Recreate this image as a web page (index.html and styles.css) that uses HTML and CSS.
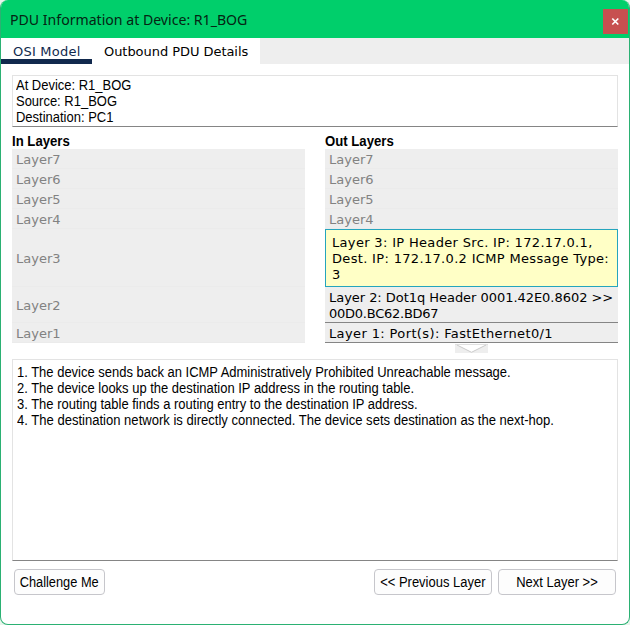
FILE: index.html
```html
<!DOCTYPE html>
<html lang="en">
<head>
<meta charset="utf-8">
<title>PDU Information</title>
<link rel="stylesheet" href="styles.css">
</head>
<body>
<div class="window">
  <header class="titlebar">
    <h1 class="title"><span class="narrow">PDU Information at Device: R1_BOG</span></h1>
    <button class="close" aria-label="Close"><svg width="9" height="9" viewBox="0 0 9 9"><path d="M1.3 1.5 7.3 7.5M7.3 1.5 1.3 7.5" stroke="#fff" stroke-width="1.7" fill="none"/></svg></button>
  </header>
  <nav class="tabs">
    <div class="tab active">OSI Model</div>
    <div class="tab outbound">Outbound PDU Details</div>
  </nav>
  <main class="content">
    <section class="box info">
      <p class="narrow">At Device: R1_BOG</p>
      <p class="narrow">Source: R1_BOG</p>
      <p class="narrow">Destination: PC1</p>
    </section>
    <div class="columns">
      <section class="column">
        <h2 class="narrow">In Layers</h2>
        <div class="layer">Layer7</div>
        <div class="layer">Layer6</div>
        <div class="layer">Layer5</div>
        <div class="layer">Layer4</div>
        <div class="layer tall">Layer3</div>
        <div class="layer medium">Layer2</div>
        <div class="layer">Layer1</div>
      </section>
      <section class="column">
        <h2 class="narrow">Out Layers</h2>
        <div class="layer">Layer7</div>
        <div class="layer">Layer6</div>
        <div class="layer">Layer5</div>
        <div class="layer">Layer4</div>
        <div class="layer tall selected">
          <p>Layer 3: IP Header Src. IP: 172.17.0.1,<br>Dest. IP: 172.17.0.2 ICMP Message Type:<br>3</p>
        </div>
        <div class="layer medium used">
          <p>Layer 2: Dot1q Header 0001.42E0.8602 &gt;&gt;<br><span class="mac">00D0.BC62.BD67</span></p>
        </div>
        <div class="layer used port">Layer 1: Port(s): FastEthernet0/1</div>
        <svg class="arrow" width="33" height="9" viewBox="0 0 33 9"><path d="M0 0H33V9H0Z" fill="#eee"/><path d="M2.5 1 16.5 8 30.5 1Z" fill="#fff"/><path d="M0 .5H33" stroke="#e0e0e0"/><path d="M2 1 16.5 8.3 31 1" fill="none" stroke="#ccc"/></svg>
      </section>
    </div>
    <section class="box details">
      <p class="narrow">1. The device sends back an ICMP Administratively Prohibited Unreachable message.</p>
      <p class="narrow">2. The device looks up the destination IP address in the routing table.</p>
      <p class="narrow">3. The routing table finds a routing entry to the destination IP address.</p>
      <p class="narrow next-hop">4. The destination network is directly connected. The device sets destination as the next-hop.</p>
    </section>
    <footer class="actions">
      <button class="btn challenge"><span class="narrow">Challenge Me</span></button>
      <button class="btn"><span class="narrow">&lt;&lt; Previous Layer</span></button>
      <button class="btn"><span class="narrow">Next Layer &gt;&gt;</span></button>
    </footer>
  </main>
</div>
</body>
</html>
```
FILE: styles.css
```css
* { box-sizing: border-box; }
body { margin: 0; background: #e8f5ec; font: 14px/16px "Liberation Sans", Arial, sans-serif; color: #000; }
h1, h2, p { margin: 0; }
p, span, .layer, .tab { white-space: nowrap; }
button { font: inherit; padding: 0; color: inherit; }
.narrow { transform: scaleX(0.927); transform-origin: left; }
span.narrow { display: inline-block; }
.window { width: 630px; height: 625px; display: flex; flex-direction: column; background: #fff; border: 1px solid #2bb173; border-top: 0; border-radius: 8px; overflow: hidden; }
.titlebar { height: 38px; flex: none; margin: 0 -1px; display: flex; justify-content: space-between; background: #00cf6b; padding: 0 2px 0 10px; }
.title { font: 15px/38px "Noto Sans", sans-serif; color: #052413; }
.title .narrow { transform: scaleX(0.94); }
.close { width: 25px; height: 25px; margin-top: 9px; border: 0; background: #c75050; display: flex; align-items: center; justify-content: center; }
.tabs { height: 26px; flex: none; display: flex; background: #eee; font: 13px/16px "DejaVu Sans", Verdana, sans-serif; }
.tab { background: #fff; padding: 6px 0 0 12px; letter-spacing: -0.05px; }
.active { width: 91px; border-bottom: 5px solid #11294d; color: #11294d; letter-spacing: 0.22px; }
.outbound { width: 168px; }
.content { flex: 1; padding: 11px 11px 0; display: flex; flex-direction: column; }
.box { width: 606px; border: 1px solid #e3e3e3; border-bottom-color: #858585; }
.info { height: 52px; padding: 1px 3px 0; }
.columns { display: flex; gap: 20px; height: 232px; }
.column { width: 293px; display: flex; flex-direction: column; }
h2 { font-size: 14px; line-height: 16px; height: 22px; padding-top: 6px; }
h2.narrow { transform: scaleX(0.94); }
.layer { height: 20px; flex: none; padding: 2px 4px 0; display: flex; align-items: center; background: #eee; border-bottom: 1px solid #ebebeb; color: #828282; font: 13px/16px "DejaVu Sans", Verdana, sans-serif; }
.tall { height: 58px; }
.medium { height: 36px; }
.selected { background: #ffffc6; border: 1px solid #25a5bd; color: #000; padding: 2px 6px 0; letter-spacing: 0.33px; }
.used { color: #000; border-bottom-color: #858585; letter-spacing: -0.04px; }
.mac { letter-spacing: -0.25px; }
.port { letter-spacing: 0.38px; }
.arrow { margin: 1px 0 0 130px; display: block; }
.details { height: 202px; padding: 4px 4px 0; }
.details .next-hop { transform: scaleX(0.932); }
.actions { display: flex; gap: 6px; padding: 8px 2px 0 2px; }
.btn { width: 118px; height: 26px; border: 1px solid #c6c6cb; border-radius: 4px; background: #fdfdfd; }
.btn .narrow { transform-origin: center; }
.challenge { width: 91px; margin-right: auto; }
.challenge .narrow { transform: scaleX(0.915); }
```
